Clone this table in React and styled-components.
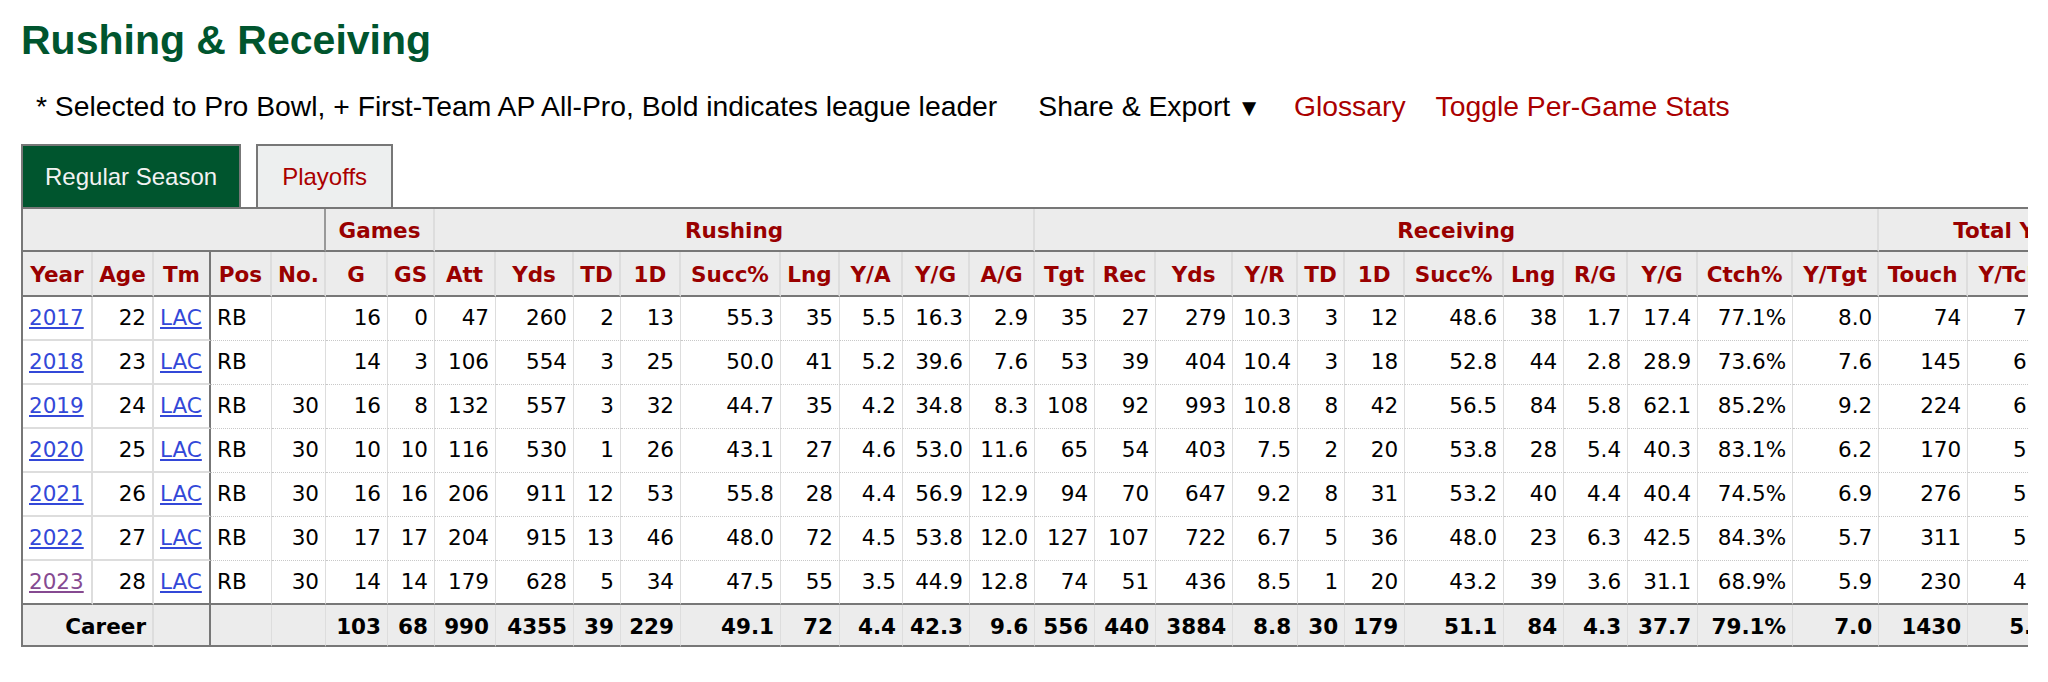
import React from "react";
import styled, { createGlobalStyle } from "styled-components";

const GlobalStyle = createGlobalStyle`
  html, body {
    margin: 0;
    padding: 0;
    background: #fff;
  }
  body {
    font-family: "Liberation Sans", Arial, sans-serif;
    color: #000;
  }
`;

// label, width, alignment of the data cells
const COLS = [
  ["Year", 70, "left"],
  ["Age", 61, "right"],
  ["Tm", 57, "left"],
  ["Pos", 61, "left"],
  ["No.", 54, "right"],
  ["G", 62],
  ["GS", 47],
  ["Att", 61],
  ["Yds", 78],
  ["TD", 47],
  ["1D", 60],
  ["Succ%", 100],
  ["Lng", 59],
  ["Y/A", 63],
  ["Y/G", 67],
  ["A/G", 65],
  ["Tgt", 60],
  ["Rec", 61],
  ["Yds", 77],
  ["Y/R", 65],
  ["TD", 47],
  ["1D", 60],
  ["Succ%", 99],
  ["Lng", 60],
  ["R/G", 64],
  ["Y/G", 70],
  ["Ctch%", 95],
  ["Y/Tgt", 86],
  ["Touch", 89],
  ["Y/Tch", 86],
  ["YScm", 85],
  ["RRTD", 75],
];

const GROUPS = [
  ["", 5, "dark"],
  ["Games", 2],
  ["Rushing", 9],
  ["Receiving", 12],
  ["Total Yds", 3],
  ["", 1],
];

const ROWS = [
  ["2017", "22", "LAC", "RB", "", "16", "0", "47", "260", "2", "13", "55.3", "35", "5.5", "16.3", "2.9", "35", "27", "279", "10.3", "3", "12", "48.6", "38", "1.7", "17.4", "77.1%", "8.0", "74", "7.3", "539", "5"],
  ["2018", "23", "LAC", "RB", "", "14", "3", "106", "554", "3", "25", "50.0", "41", "5.2", "39.6", "7.6", "53", "39", "404", "10.4", "3", "18", "52.8", "44", "2.8", "28.9", "73.6%", "7.6", "145", "6.6", "958", "6"],
  ["2019", "24", "LAC", "RB", "30", "16", "8", "132", "557", "3", "32", "44.7", "35", "4.2", "34.8", "8.3", "108", "92", "993", "10.8", "8", "42", "56.5", "84", "5.8", "62.1", "85.2%", "9.2", "224", "6.9", "1550", "11"],
  ["2020", "25", "LAC", "RB", "30", "10", "10", "116", "530", "1", "26", "43.1", "27", "4.6", "53.0", "11.6", "65", "54", "403", "7.5", "2", "20", "53.8", "28", "5.4", "40.3", "83.1%", "6.2", "170", "5.5", "933", "3"],
  ["2021", "26", "LAC", "RB", "30", "16", "16", "206", "911", "12", "53", "55.8", "28", "4.4", "56.9", "12.9", "94", "70", "647", "9.2", "8", "31", "53.2", "40", "4.4", "40.4", "74.5%", "6.9", "276", "5.6", "1558", "20"],
  ["2022", "27", "LAC", "RB", "30", "17", "17", "204", "915", "13", "46", "48.0", "72", "4.5", "53.8", "12.0", "127", "107", "722", "6.7", "5", "36", "48.0", "23", "6.3", "42.5", "84.3%", "5.7", "311", "5.3", "1637", "18"],
  ["2023", "28", "LAC", "RB", "30", "14", "14", "179", "628", "5", "34", "47.5", "55", "3.5", "44.9", "12.8", "74", "51", "436", "8.5", "1", "20", "43.2", "39", "3.6", "31.1", "68.9%", "5.9", "230", "4.6", "1064", "6"],
];

const CAREER = ["", "", "", "103", "68", "990", "4355", "39", "229", "49.1", "72", "4.4", "42.3", "9.6", "556", "440", "3884", "8.8", "30", "179", "51.1", "84", "4.3", "37.7", "79.1%", "7.0", "1430", "5.8", "8239", "69"];

const TABLE_WIDTH = COLS.reduce((sum, c) => sum + c[1], 0) + 2;

const EDGES = {
  soft: "2px solid #ddd",
  hard: "2px solid #777",
  thin: "1px solid #ddd",
  dark: "2px solid #999",
};

const edgeFor = (i) => (i === 2 ? "hard" : i < 2 ? "soft" : "thin");

const Page = styled.div`
  padding: 17px 20px 0 21px;
`;

const Heading = styled.h2`
  margin: 0;
  font-size: 41px;
  line-height: 47px;
  font-weight: bold;
  color: #00552e;
`;

const Legend = styled.div`
  display: flex;
  align-items: baseline;
  margin-top: 26px;
  padding-left: 15px;
  font-size: 28.3px;
  line-height: 32px;
  white-space: nowrap;
`;

const ToolItem = styled.span`
  margin-left: ${(p) => p.$space}px;
  color: ${(p) => p.$color || "#000"};
  cursor: pointer;
`;

const Arrow = styled.span`
  font-size: 24px;
  margin-left: 7px;
`;

const Tabs = styled.div`
  display: flex;
  gap: 15px;
  margin-top: 20px;
`;

const Tab = styled.div`
  height: 61px;
  line-height: 61px;
  padding: 0 ${(p) => (p.$active ? 22 : 24)}px;
  border: 2px solid #777;
  border-bottom: none;
  font-size: 24px;
  background: ${(p) => (p.$active ? "#00552e" : "#edefef")};
  color: ${(p) => (p.$active ? "#f2f2f2" : "#a00")};
`;

const TableWrap = styled.div`
  width: 2007px;
  overflow: hidden;
`;

const Table = styled.table`
  width: ${TABLE_WIDTH}px;
  table-layout: fixed;
  border-collapse: separate;
  border-spacing: 0;
  border-top: 2px solid #777;
  border-left: 2px solid #777;
  font-family: "DejaVu Sans", Verdana, sans-serif;
  font-size: 21.5px;
`;

const HeadCell = styled.th`
  padding: ${(p) => (p.$over ? "9px 6px 6px" : "10px 6px 7px")};
  line-height: 26px;
  font-weight: bold;
  color: #900;
  text-align: center;
  white-space: nowrap;
  overflow: hidden;
  background: #ececec;
  border-right: ${(p) => EDGES[p.$edge]};
  border-bottom: 2px solid #777;
`;

const Body = styled.tbody`
  & > tr:last-child > td {
    border-bottom: 2px solid #777;
    padding-bottom: 8px;
  }
`;

const Td = styled.td`
  padding: 8px 6px ${(p) => (p.$edge === "thin" ? 9 : 8)}px;
  line-height: 26px;
  white-space: nowrap;
  overflow: hidden;
  text-align: ${(p) => p.$align};
  border-right: ${(p) => EDGES[p.$edge]};
  border-bottom: ${(p) =>
    p.$edge === "thin" ? "1px dotted #c8c8c8" : "2px solid #ddd"};
`;

const CareerCell = styled(Td)`
  padding: 9px 6px 5px;
  font-weight: bold;
  background: #ececec;
  border-bottom: 2px solid #777;
`;

const Link = styled.a`
  color: ${(p) => (p.$visited ? "#864a91" : "#3348d8")};
  text-decoration: underline;
`;

const renderCell = (value, i, isLast) => {
  if (i === 0) return <Link $visited={isLast}>{value}</Link>;
  if (i === 2) return <Link>{value}</Link>;
  return value;
};

export default function App() {
  return (
    <>
      <GlobalStyle />
      <Page>
        <Heading>Rushing &amp; Receiving</Heading>
        <Legend>
          <span>
            * Selected to Pro Bowl, + First-Team AP All-Pro, Bold indicates
            league leader
          </span>
          <ToolItem $space={41}>
            Share &amp; Export<Arrow>▼</Arrow>
          </ToolItem>
          <ToolItem $space={33} $color="#a00">
            Glossary
          </ToolItem>
          <ToolItem $space={30} $color="#a00">
            Toggle Per-Game Stats
          </ToolItem>
        </Legend>
        <Tabs>
          <Tab $active>Regular Season</Tab>
          <Tab>Playoffs</Tab>
        </Tabs>
        <TableWrap>
          <Table>
            <colgroup>
              {COLS.map(([label, w], i) => (
                <col key={i} style={{ width: w }} />
              ))}
            </colgroup>
            <thead>
              <tr>
                {GROUPS.map(([label, span, edge], i) => (
                  <HeadCell key={i} colSpan={span} $over $edge={edge || "soft"}>
                    {label}
                  </HeadCell>
                ))}
              </tr>
              <tr>
                {COLS.map(([label], i) => (
                  <HeadCell key={i} $edge={i === 2 ? "hard" : "soft"}>
                    {label}
                  </HeadCell>
                ))}
              </tr>
            </thead>
            <Body>
              {ROWS.map((row, r) => (
                <tr key={row[0]}>
                  {row.map((value, i) => (
                    <Td key={i} $align={COLS[i][2] || "right"} $edge={edgeFor(i)}>
                      {renderCell(value, i, r === ROWS.length - 1)}
                    </Td>
                  ))}
                </tr>
              ))}
            </Body>
            <tfoot>
              <tr>
                <CareerCell colSpan={2} $align="right" $edge="soft">
                  Career
                </CareerCell>
                {CAREER.map((value, k) => {
                  const i = k + 2;
                  return (
                    <CareerCell key={i} $align="right" $edge={edgeFor(i)}>
                      {value}
                    </CareerCell>
                  );
                })}
              </tr>
            </tfoot>
          </Table>
        </TableWrap>
      </Page>
    </>
  );
}
